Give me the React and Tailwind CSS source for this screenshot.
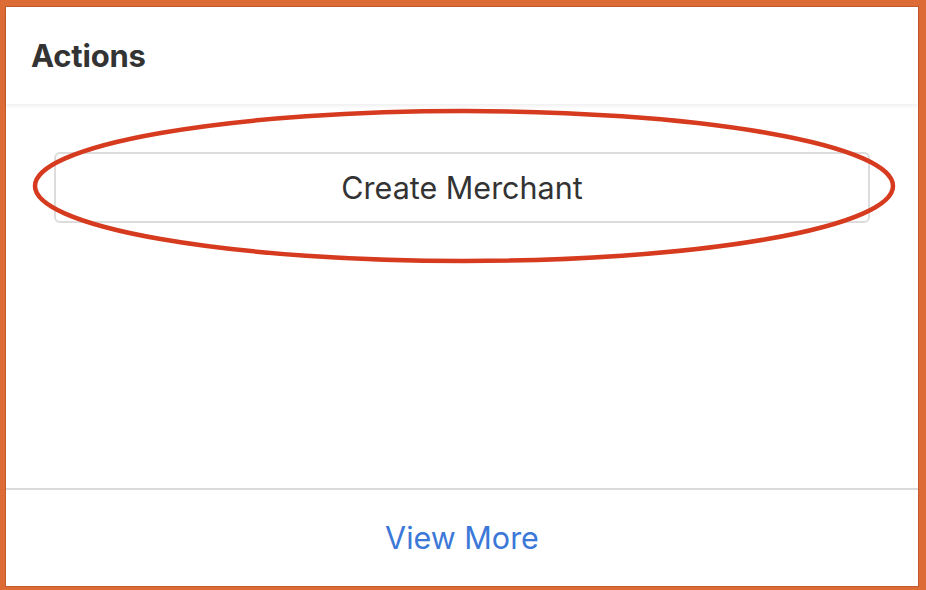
import React from 'react';

const font = { fontFamily: 'Inter, "Noto Sans", sans-serif' };

export default function App() {
  return (
    <div className="w-[926px] h-[590px] bg-[#dd6b35] pt-[6px] pl-[5px] pr-[7px] pb-[3px]" style={font}>
      <div className="relative w-full h-full border border-[#c4592b] bg-white flex flex-col">
        {/* header */}
        <div className="h-[97px] shrink-0 flex items-center pl-[25px] shadow-[0_2px_4px_rgba(0,0,0,0.07)] relative z-10">
          <h2 className="text-[31px] font-bold text-[#333333] tracking-[-0.2px] pt-[2px]">Actions</h2>
        </div>

        {/* body */}
        <div className="flex-1 px-[48px] pt-[48px]">
          <button className="w-full h-[71px] border-2 border-[#dcdcdc] rounded-[6px] text-[30.5px] text-[#333333] flex items-center justify-center">
            Create Merchant
          </button>
        </div>

        {/* footer */}
        <div className="h-[98px] shrink-0 border-t-2 border-[#dadada] flex items-center justify-center">
          <a className="text-[30.5px] text-[#3b78d8] cursor-pointer">View More</a>
        </div>

        {/* annotation ellipse */}
        <svg className="absolute left-0 top-0 pointer-events-none" width="912" height="579">
          <ellipse cx="458" cy="179" rx="429" ry="75" fill="none" stroke="#d63a1f" strokeWidth="4.5" />
        </svg>
      </div>
    </div>
  );
}
